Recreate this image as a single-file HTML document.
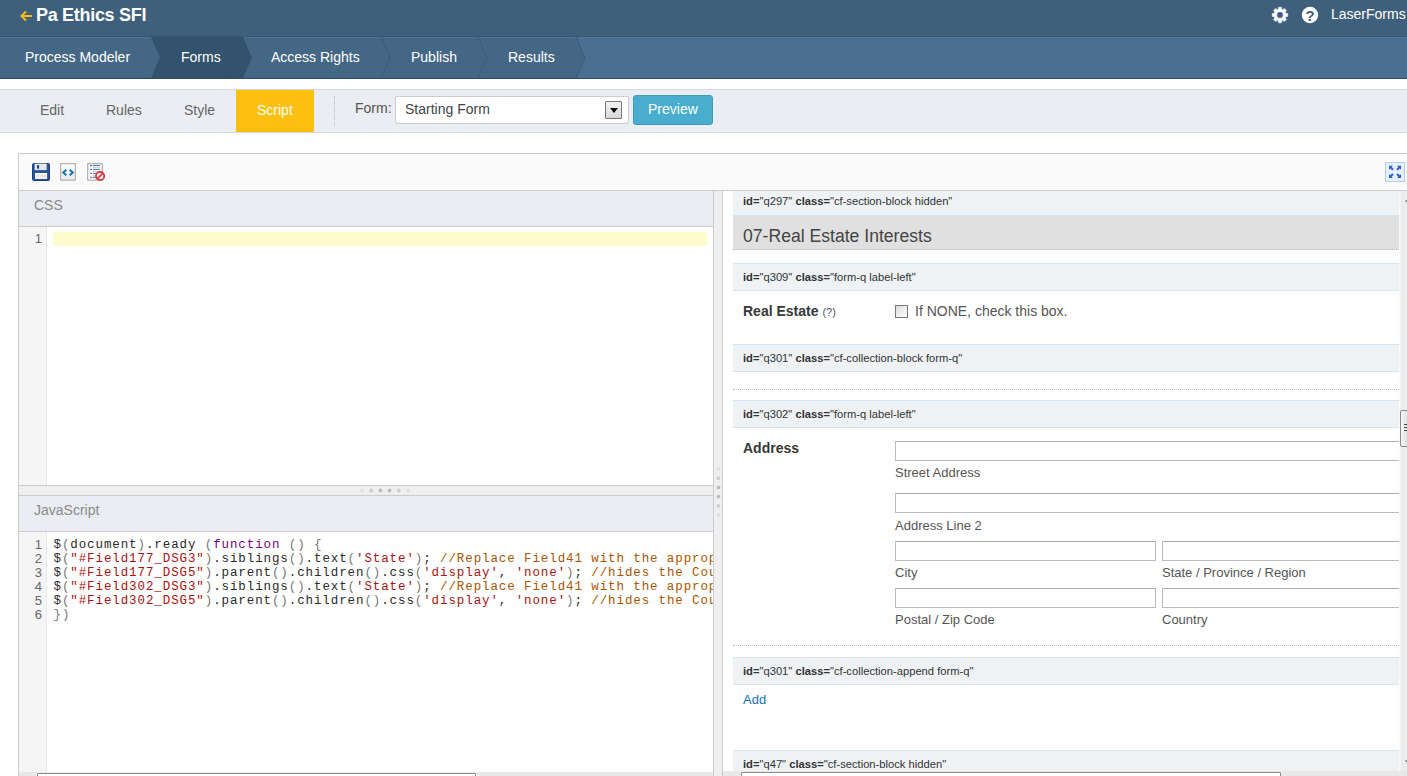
<!DOCTYPE html>
<html><head><meta charset="utf-8">
<style>
*{box-sizing:border-box;margin:0;padding:0}
html,body{width:1407px;height:776px;overflow:hidden;background:#fff;font-family:"Liberation Sans",sans-serif;}
.abs{position:absolute}
#top{position:absolute;left:0;top:0;width:1407px;height:37px;background:#3e607d;}
#title{position:absolute;left:36px;top:5px;font-size:18px;letter-spacing:-0.3px;font-weight:bold;color:#fff;line-height:20px;white-space:nowrap}
#user{position:absolute;left:1331px;top:5px;font-size:14px;color:#fff;line-height:18px;white-space:nowrap}
#nav{position:absolute;left:0;top:36px;width:1407px;height:43px;background:#4a6f91;border-top:1px solid #385670;border-bottom:1px solid #2d4962}
#nav svg{position:absolute;left:0;top:0}
.nt{position:absolute;top:11px;font-size:14px;color:#fff;line-height:18px;white-space:nowrap}
#tb{position:absolute;left:0;top:89px;width:1407px;height:44px;background:#eaedf2;border-top:1px solid #d6dae2;border-bottom:1px solid #d6dae2}
.tt{position:absolute;top:11px;font-size:14px;color:#666;line-height:18px;white-space:nowrap}
#script{position:absolute;left:236px;top:0;width:78px;height:42px;background:#fdc010;color:#fff;font-size:14px;line-height:18px;padding:11px 0 0 21px}
#sel{position:absolute;left:395px;top:6px;width:234px;height:28px;background:#fff;border:1px solid #ccc;border-radius:2px;font-size:14px;color:#444;line-height:18px;padding:3px 0 0 9px}
#selbtn{position:absolute;left:605px;top:11px;width:17px;height:18px;border:1px solid #777;background:linear-gradient(#f4f4f4,#d8d8d8);border-radius:1px}
#selbtn:after{content:"";position:absolute;left:4px;top:6px;border:4px solid transparent;border-top:5px solid #000;border-bottom:0}
#prev{position:absolute;left:633px;top:5px;width:80px;height:30px;background:#48adce;border:1px solid #3d9cbc;border-radius:3px;color:#fff;font-size:14px;line-height:18px;padding:4px 0 0 14px}
#panel{position:absolute;left:18px;top:153px;width:1400px;height:641px;border:1px solid #ccc;background:#fafafa}
#lcol{position:absolute;left:19px;top:190px;width:694px;height:590px;overflow:hidden;background:#fff;border-top:1px solid #ccc}
.hd{position:absolute;left:0;width:694px;height:36px;background:#eaedf2;border-bottom:1px solid #ccc;font-size:14px;color:#8a8a8a;line-height:18px;padding:5px 0 0 15px}
.gut{position:absolute;left:0;width:28px;background:#f5f5f5;border-right:1px solid #e8e8e8}
.ln{position:absolute;left:0;width:23px;text-align:right;font-family:"Liberation Sans",sans-serif;font-size:13px;color:#666;line-height:14px}
.code{position:absolute;left:34.500px;font-family:"Liberation Mono",monospace;font-size:12.500px;letter-spacing:0.900px;line-height:14px;color:#2a2a2a;white-space:pre}
.code i{font-style:normal;color:#777}.s{color:#a11}.c{color:#a50}.k{color:#708}
#hsplit{position:absolute;left:0;top:294px;width:694px;height:11px;background:#efefef;border-top:1px solid #ccc;border-bottom:1px solid #ccc}
#vsplit{position:absolute;left:713px;top:190px;width:10px;height:590px;background:#efefef;border-left:1px solid #ccc;border-right:1px solid #ccc}
#rcol{position:absolute;left:723px;top:190px;width:676px;height:590px;background:#fff;overflow:hidden;border-top:1px solid #ccc}
.row{position:absolute;left:10px;width:680px;height:28px;background:#eef2f5;border-top:1px solid #d6e4ef;border-bottom:1px solid #d6e4ef;font-size:11.2px;color:#333;line-height:14px;padding:6px 0 0 10px;white-space:nowrap}
.row b{font-weight:bold}
.dot{position:absolute;left:10px;width:680px;height:0;border-top:1px dotted #bbb}
.inp{position:absolute;height:20px;border:1px solid #bbb;background:#fff;border-top-color:#aaa}
.sub{position:absolute;font-size:13px;color:#555;line-height:16px;white-space:nowrap}
.lbl{position:absolute;left:20px;font-size:14px;font-weight:bold;color:#383838;line-height:18px;white-space:nowrap}
#vsb{position:absolute;left:1400px;top:191px;width:7px;height:581px;background:#ececec;border-left:1px solid #f4f4f4}
.hsb{position:absolute;background:#e8e8e8}
.hth{position:absolute;top:1px;height:8px;background:#fff;border:1px solid #8c8c8c;border-radius:1px}
</style></head><body>
<div id="top">
 <svg class="abs" style="left:20px;top:10px" width="13" height="12" viewBox="0 0 13 12"><path d="M12 6H2M6 1.5L1.5 6L6 10.5" fill="none" stroke="#fdb913" stroke-width="2"/></svg>
 <div id="title">Pa Ethics SFI</div>
 <svg class="abs" style="left:1271px;top:6px" width="18" height="18" viewBox="0 0 18 18"><path fill="#fff" fill-rule="evenodd" stroke="#fff" stroke-width="0.5" stroke-linejoin="round" d="M7.37 3.33L7.49 1.25L10.51 1.25L10.63 3.33L11.86 3.84L13.42 2.45L15.55 4.58L14.16 6.14L14.67 7.37L16.75 7.49L16.75 10.51L14.67 10.63L14.16 11.86L15.55 13.42L13.42 15.55L11.86 14.16L10.63 14.67L10.51 16.75L7.49 16.75L7.37 14.67L6.14 14.16L4.58 15.55L2.45 13.42L3.84 11.86L3.33 10.63L1.25 10.51L1.25 7.49L3.33 7.37L3.84 6.14L2.45 4.58L4.58 2.45L6.14 3.84ZM5.70 9.00 a3.30 3.30 0 1 0 6.60 0a3.30 3.30 0 1 0 -6.60 0Z"/></svg>
 <svg class="abs" style="left:1301px;top:6px" width="18" height="18" viewBox="0 0 18 18"><circle cx="9" cy="9" r="8.200" fill="#fff"/><text x="9" y="14.5" text-anchor="middle" font-family="Liberation Sans, sans-serif" font-weight="bold" font-size="15" fill="#3e607d">?</text></svg>
 <div id="user">LaserForms</div>
</div>
<div id="nav">
 <svg width="1407" height="41" viewBox="0 0 1407 41">
  <path d="M0 0H576L585 20.500L576 41H0Z" fill="#456786"/>
  <rect x="0" y="0" width="1407" height="1" fill="#5079a0"/><rect x="0" y="0" width="580" height="1" fill="#4d7192"/>
  <path d="M151 0H243L252 20.500L243 41H151L160 20.500Z" fill="#32526d"/>
  <path d="M381 0L390 20.500L381 41M478 0L487 20.500L478 41M576 0L585 20.500L576 41" fill="none" stroke="#3b5b79" stroke-width="1"/>
 </svg>
 <div class="nt" style="left:25px">Process Modeler</div>
 <div class="nt" style="left:181px">Forms</div>
 <div class="nt" style="left:271px">Access Rights</div>
 <div class="nt" style="left:411px">Publish</div>
 <div class="nt" style="left:508px">Results</div>
</div>
<div id="tb">
 <div class="tt" style="left:40px">Edit</div>
 <div class="tt" style="left:106px">Rules</div>
 <div class="tt" style="left:184px">Style</div>
 <div id="script">Script</div>
 <div class="abs" style="left:334px;top:6px;height:30px;border-left:1px dotted #b5bcc8"></div>
 <div class="tt" style="left:355px;top:9px;color:#555">Form:</div>
 <div id="sel">Starting Form</div><div id="selbtn"></div>
 <div id="prev">Preview</div>
</div>
<div id="panel"></div>
<!-- toolbar icons -->
<svg class="abs" style="left:32px;top:163px" width="18" height="18" viewBox="0 0 18 18"><rect x="0.500" y="0.500" width="17" height="17" rx="1.500" fill="#2c549a" stroke="#1d3f80"/><rect x="3" y="1" width="11.200" height="5.800" fill="#e6e6e6" stroke="#fff" stroke-width="0.600"/><rect x="5" y="2.100" width="2.100" height="3.600" fill="#1d4a8f"/><rect x="3" y="10" width="12.100" height="5.900" fill="#fff"/><rect x="3" y="11.800" width="12.100" height="0.700" fill="#c9c9c9"/><rect x="3" y="13.600" width="12.100" height="0.700" fill="#c9c9c9"/></svg>
<svg class="abs" style="left:60px;top:163px" width="16" height="18" viewBox="0 0 16 18"><defs><linearGradient id="g1" x1="0" y1="0" x2="0" y2="1"><stop offset="0" stop-color="#fbfbfb"/><stop offset="1" stop-color="#e9e9e9"/></linearGradient></defs><rect x="0.700" y="0.700" width="14.600" height="16.400" fill="url(#g1)" stroke="#a3a3a3" stroke-width="1"/><path d="M6.300 6.700L3.300 9.500L6.300 12.300M9.700 6.700L12.700 9.500L9.700 12.300" fill="none" stroke="#1a76b0" stroke-width="2.100"/></svg>
<svg class="abs" style="left:87px;top:163px" width="19" height="19" viewBox="0 0 19 19"><rect x="0.700" y="0.700" width="14.600" height="16.400" fill="#f8f8f8" stroke="#a3a3a3" stroke-width="1"/><path d="M3 2.500h2M6 2.500h7M3 6.400h2M6 6.400h7M3 10.400h2M6 10.400h4M3 14.400h2M6 14.400h3" stroke="#3b79c8" stroke-width="1"/><path d="M6 4.500h7M6 8.400h7M6 12.400h3" stroke="#c4c4c4" stroke-width="0.800"/><circle cx="13.100" cy="13" r="4.100" fill="#fff" stroke="#dc2f37" stroke-width="1.700"/><path d="M10.300 15.800L15.900 10.200" stroke="#dc2f37" stroke-width="1.800"/></svg>
<svg class="abs" style="left:1385px;top:162px" width="20" height="20" viewBox="0 0 20 20"><rect x="0.500" y="0.500" width="19" height="19" fill="#e7effa" stroke="#b3ccef"/><path d="M4 3.800h4l-1.300 1.300 2 2-1.400 1.400-2-2L4 7.800zM16 3.800v4l-1.300-1.300-2 2-1.400-1.400 2-2L12 3.800zM4 16v-4l1.300 1.300 2-2 1.400 1.400-2 2L8 16zM16 16h-4l1.300-1.300-2-2 1.400-1.400 2 2L16 12z" fill="#2a62c6"/></svg>

<div class="abs" style="left:19px;top:190px;width:1388px;height:1px;background:#ccc;z-index:5"></div>
<div id="lcol">
 <div class="hd" style="top:0">CSS</div>
 <div class="gut" style="top:36px;height:259px"></div>
 <div class="abs" style="left:34px;top:41px;width:654px;height:14px;background:#fffbcc"></div>
 <div class="ln" style="top:41px">1</div>
 <div id="hsplit"><svg class="abs" style="left:339px;top:0px" width="56" height="9" viewBox="0 0 56 9"><g fill="#bdbdbd"><circle cx="4" cy="4.500" r="1.900" opacity=".3"/><circle cx="13.200" cy="4.500" r="1.900" opacity=".65"/><circle cx="22.400" cy="4.500" r="1.900"/><circle cx="31.600" cy="4.500" r="1.900"/><circle cx="40.800" cy="4.500" r="1.900" opacity=".65"/><circle cx="50" cy="4.500" r="1.900" opacity=".3"/></g></svg></div>
 <div class="hd" style="top:305px">JavaScript</div>
 <div class="gut" style="top:341px;height:260px"></div>
 <div class="ln" style="top:347px">1<br>2<br>3<br>4<br>5<br>6</div>
<div class="code" style="top:347px">$<i>(</i>document<i>)</i>.ready <i>(</i><span class="k">function</span> <i>()</i> <i>{</i>
$<i>(</i><span class="s">"#Field177_DSG3"</span><i>)</i>.siblings<i>()</i>.text<i>(</i><span class="s">'State'</span><i>)</i>; <span class="c">//Replace Field41 with the appropriate field</span>
$<i>(</i><span class="s">"#Field177_DSG5"</span><i>)</i>.parent<i>()</i>.children<i>()</i>.css<i>(</i><span class="s">'display'</span>, <span class="s">'none'</span><i>)</i>; <span class="c">//hides the Country field</span>
$<i>(</i><span class="s">"#Field302_DSG3"</span><i>)</i>.siblings<i>()</i>.text<i>(</i><span class="s">'State'</span><i>)</i>; <span class="c">//Replace Field41 with the appropriate field</span>
$<i>(</i><span class="s">"#Field302_DSG5"</span><i>)</i>.parent<i>()</i>.children<i>()</i>.css<i>(</i><span class="s">'display'</span>, <span class="s">'none'</span><i>)</i>; <span class="c">//hides the Country field</span>
<i>})</i></div>
</div>
<div id="vsplit"><svg class="abs" style="left:1px;top:275px" width="8" height="56" viewBox="0 0 8 56"><g fill="#bdbdbd"><circle cy="4" cx="3.500" r="1.900" opacity=".3"/><circle cy="13.200" cx="3.500" r="1.900" opacity=".65"/><circle cy="22.400" cx="3.500" r="1.900"/><circle cy="31.600" cx="3.500" r="1.900"/><circle cy="40.800" cx="3.500" r="1.900" opacity=".65"/><circle cy="50" cx="3.500" r="1.900" opacity=".3"/></g></svg></div>
<div id="rcol">
 <div class="row" style="top:-3px;padding-top:5px"><b>id=</b>"q297" <b>class=</b>"cf-section-block hidden"</div>
 <div class="abs" style="left:10px;top:25px;width:680px;height:34px;background:#e0e0e0;border-bottom:1px dotted #bbb;font-size:17.6px;color:#444;line-height:22px;padding:9px 0 0 10px">07-Real Estate Interests</div>
 <div class="row" style="top:72px"><b>id=</b>"q309" <b>class=</b>"form-q label-left"</div>
 <div class="lbl" style="top:111px">Real Estate <span style="font-weight:normal;font-size:11px;color:#555">(?)</span></div>
 <div class="abs" style="left:172px;top:114px;width:13px;height:13px;border:1px solid #777;background:linear-gradient(135deg,#ddd,#fff)"></div>
 <div class="sub" style="left:192px;top:111px;font-size:14px;line-height:18px">If NONE, check this box.</div>
 <div class="row" style="top:153px"><b>id=</b>"q301" <b>class=</b>"cf-collection-block form-q"</div>
 <div class="dot" style="top:198px"></div>
 <div class="row" style="top:209px"><b>id=</b>"q302" <b>class=</b>"form-q label-left"</div>
 <div class="lbl" style="top:248px">Address</div>
 <div class="inp" style="left:172px;top:250px;width:520px"></div>
 <div class="sub" style="left:172px;top:274px">Street Address</div>
 <div class="inp" style="left:172px;top:302px;width:520px"></div>
 <div class="sub" style="left:172px;top:327px">Address Line 2</div>
 <div class="inp" style="left:172px;top:350px;width:261px"></div>
 <div class="inp" style="left:439px;top:350px;width:261px"></div>
 <div class="sub" style="left:172px;top:374px">City</div>
 <div class="sub" style="left:439px;top:374px">State / Province / Region</div>
 <div class="inp" style="left:172px;top:397px;width:261px"></div>
 <div class="inp" style="left:439px;top:397px;width:261px"></div>
 <div class="sub" style="left:172px;top:421px">Postal / Zip Code</div>
 <div class="sub" style="left:439px;top:421px">Country</div>
 <div class="dot" style="top:454px"></div>
 <div class="row" style="top:466px"><b>id=</b>"q301" <b>class=</b>"cf-collection-append form-q"</div>
 <div class="sub" style="left:20px;top:501px;color:#1a6fb5">Add</div>
 <div class="row" style="top:559px"><b>id=</b>"q47" <b>class=</b>"cf-section-block hidden"</div>
</div>
<div id="vsb">
 <svg class="abs" style="left:3.500px;top:7px" width="4" height="4" viewBox="0 0 4 4"><path d="M0 3.500L3.500 0.500V3.500Z" fill="#333"/></svg>
 <div class="abs" style="left:-1px;top:219px;width:10px;height:37px;border:1px solid #8a8a8a;border-radius:2px;background:linear-gradient(90deg,#f6f6f6,#dcdcdc)"></div>
 <div class="abs" style="left:3px;top:233px;width:4px;height:1px;background:#444"></div>
 <div class="abs" style="left:3px;top:236px;width:4px;height:1px;background:#444"></div>
 <div class="abs" style="left:3px;top:239px;width:4px;height:1px;background:#444"></div>
 <svg class="abs" style="left:3.500px;top:569px" width="4" height="4" viewBox="0 0 4 4"><path d="M0 0.500H3.500V3.500Z" fill="#333"/></svg>
</div>
<div class="hsb" style="left:19px;top:772px;width:694px;height:4px"><div class="hth" style="left:18px;width:439px"></div></div>
<div class="hsb" style="left:723px;top:771px;width:684px;height:5px"><div class="hth" style="left:18px;width:540px"></div></div>
</body></html>
